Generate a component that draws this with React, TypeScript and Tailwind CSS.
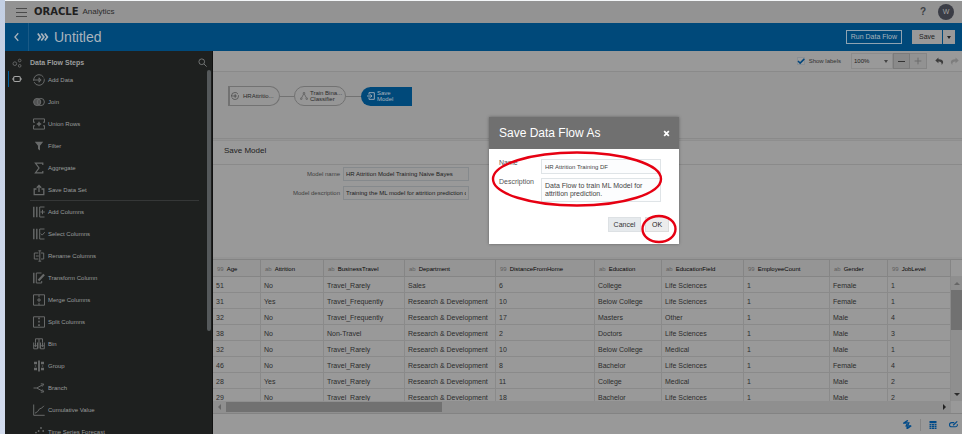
import type { ReactNode } from 'react';

const columns = [
  { name: 'Age', kind: '99', width: 'w-[48px]' },
  { name: 'Attrition', kind: 'ab', width: 'w-[63px]' },
  { name: 'BusinessTravel', kind: 'ab', width: 'w-[81px]' },
  { name: 'Department', kind: 'ab', width: 'w-[91px]' },
  { name: 'DistanceFromHome', kind: '99', width: 'w-[99px]' },
  { name: 'Education', kind: 'ab', width: 'w-[67px]' },
  { name: 'EducationField', kind: 'ab', width: 'w-[82px]' },
  { name: 'EmployeeCount', kind: '99', width: 'w-[86px]' },
  { name: 'Gender', kind: 'ab', width: 'w-[58px]' },
  { name: 'JobLevel', kind: '99', width: 'w-[63px]' },
];

const rows = [
  ['51', 'No', 'Travel_Rarely', 'Sales', '6', 'College', 'Life Sciences', '1', 'Female', '1'],
  ['31', 'Yes', 'Travel_Frequently', 'Research & Development', '10', 'Below College', 'Life Sciences', '1', 'Female', '1'],
  ['32', 'No', 'Travel_Frequently', 'Research & Development', '17', 'Masters', 'Other', '1', 'Male', '4'],
  ['38', 'No', 'Non-Travel', 'Research & Development', '2', 'Doctors', 'Life Sciences', '1', 'Male', '3'],
  ['32', 'No', 'Travel_Rarely', 'Research & Development', '10', 'Below College', 'Medical', '1', 'Male', '1'],
  ['46', 'No', 'Travel_Rarely', 'Research & Development', '8', 'Bachelor', 'Life Sciences', '1', 'Female', '4'],
  ['28', 'Yes', 'Travel_Rarely', 'Research & Development', '11', 'College', 'Medical', '1', 'Male', '2'],
  ['29', 'No', 'Travel_Rarely', 'Research & Development', '18', 'Bachelor', 'Life Sciences', '1', 'Male', '2'],
];

function Icon({ children, className = 'size-3' }: { children: ReactNode; className?: string }) {
  return (
    <svg viewBox="0 0 12 12" className={`${className} shrink-0`} fill="none" stroke="currentColor" strokeWidth="1" aria-hidden="true">
      {children}
    </svg>
  );
}

const addData = (
  <>
    <circle cx="6" cy="6" r="5.3" strokeDasharray="14 1.5" />
    <path d="M0 6h7M6 4l2.2 2L6 8M6 3.6v4.8" />
  </>
);

const steps: { label: string; icon: ReactNode; divider?: boolean }[] = [
  { label: 'Add Data', icon: addData },
  {
    label: 'Join',
    icon: (
      <>
        <circle cx="4.2" cy="6" r="3.6" fill="currentColor" fillOpacity=".7" />
        <circle cx="7.8" cy="6" r="3.6" />
      </>
    ),
  },
  {
    label: 'Union Rows',
    icon: (
      <>
        <path d="M.5 4V.9h11V4M.5 8v3.1h11V8M0 4.2h2M10 4.2h2M0 7.8h2M10 7.8h2" />
        <path d="M6 3.8v4.4M3.8 6h4.4" strokeWidth="1.4" />
      </>
    ),
  },
  { label: 'Filter', icon: <path d="M1.8 1.8h8.4L7 5.8v4.6L5 9V5.8z" fill="currentColor" stroke="none" /> },
  { label: 'Aggregate', icon: <path d="M9.8 3V1.2H2.4L6 6 2.4 10.8h7.4V9" strokeWidth="1.2" /> },
  { label: 'Save Data Set', divider: true, icon: <path d="M3.5 5H1.2v5.6h9.6V5H8.5M6 8V1.6M3.8 3.8 6 1.4l2.2 2.4" strokeWidth="1.3" /> },
  {
    label: 'Add Columns',
    icon: (
      <>
        <path d="M.8.8v10.4M3.8.8v10.4" strokeWidth="1.4" />
        <path d="M11.5 1H6.7v10h4.8M9.5 3.8v4.4M7.4 6h4.4" />
      </>
    ),
  },
  {
    label: 'Select Columns',
    icon: (
      <>
        <path d="M.8.8v10.4M3.8.8v10.4" strokeWidth="1.4" />
        <path d="M11.5 1H6.7v10h4.8M7.8 5.6l1.4 1.5 2.6-2.9" />
      </>
    ),
  },
  {
    label: 'Rename Columns',
    icon: (
      <>
        <path d="M5.4 3H1.3v6h4.1M8 3h2.7v6H8M2.8 6h3" />
        <path d="M6.8.8v10.4M5.4.8h2.8M5.4 11.2h2.8" />
      </>
    ),
  },
  {
    label: 'Transform Column',
    icon: (
      <>
        <path d="M.8.8v10.4" strokeWidth="1.4" />
        <path d="M8.5 1H3.3v10h5.4V9" />
        <path d="m5.5 8.5 5.6-6" strokeWidth="2.2" />
      </>
    ),
  },
  { label: 'Merge Columns', icon: <path d="M.5.8h11v10.4H.5zM6 .8v2.4M6 8.8v2.4M6 4v4M4 6h4" /> },
  {
    label: 'Split Columns',
    icon: (
      <>
        <path d="M.5.8h11v10.4H.5z" />
        <path d="M6 1.4v9.4" strokeWidth="1.6" strokeDasharray="1.8 1.6" />
      </>
    ),
  },
  {
    label: 'Bin',
    icon: <path d="M2.5 4.5V.8h7v3.7M.7 4.5v6.3h3.8V4.5M7.5 4.5v6.3h3.8V4.5M2.5 4.5v4M1 7.2l1.5 1.6L4 7.2M9.5 4.5v4M8 7.2l1.5 1.6L11 7.2M6 1v9.5" />,
  },
  {
    label: 'Group',
    icon: (
      <>
        <path d="M6 .6v10.8" strokeWidth="1.8" />
        <path d="M1 3h3M8 3h3M1 9h3M8 9h3" strokeWidth="2.6" />
        <path d="M1.8 6h1.4M8.8 6h1.4" strokeWidth="1.2" />
      </>
    ),
  },
  { label: 'Branch', icon: <path d="M.5 6h3.3l5.8-3.2M3.8 6l5.8 3.2M7.8 1.8l3 .3-1.6 2.5M7.8 10.2l3-.3-1.6-2.5" /> },
  { label: 'Cumulative Value', icon: <path d="M.7.5v10.8h11M2 9.2l2.6-1.6 2-2.8 2-.6 2.3-2.4" /> },
  {
    label: 'Time Series Forecast',
    icon: (
      <g fill="currentColor" stroke="none">
        <circle cx="8" cy="2" r=".9" />
        <circle cx="5.6" cy="5" r=".9" />
        <circle cx="10.2" cy="5" r=".9" />
        <circle cx="3" cy="6.6" r=".9" />
        <circle cx="1" cy="9.4" r=".9" />
      </g>
    ),
  },
];

const undoShape = <path d="M4.6.8.4 4.6l4.2 3.6V5.9c3-.2 4.6 1 4.2 4.9C12.600 7 11 2.800 4.600 3z" fill="currentColor" stroke="none" />;

function TopBar() {
  return (
    <header className="flex h-[22px] shrink-0 items-center bg-[#939393] text-[#2b2b2b]">
      <button aria-label="Menu" className="ml-[11px] flex w-[11px] flex-col gap-[3px]">
        <span className="h-px w-full bg-[#4a4a4a]" />
        <span className="h-px w-full bg-[#4a4a4a]" />
        <span className="h-px w-full bg-[#4a4a4a]" />
      </button>
      <span className="ml-[7px] font-['DejaVu_Sans','Liberation_Sans',sans-serif] text-[10px] font-bold leading-3 text-[#202020]">ORACLE</span>
      <span className="ml-1 text-[8px] leading-3">Analytics</span>
      <button aria-label="Help" className="ml-auto text-[10px] font-bold leading-3 text-[#3c3f44]">?</button>
      <button aria-label="Account" className="mr-2 ml-3 flex size-4 items-center justify-center rounded-full bg-[#3b3d46] text-[7px] leading-2 text-[#a4a4a4]">W</button>
    </header>
  );
}

function TitleBar() {
  return (
    <div className="flex h-7 shrink-0 items-center bg-[#00497a] text-[#a9b4bd]">
      <button aria-label="Back" className="flex h-full w-6 items-center justify-center border-r border-[#1a5a86]">
        <Icon className="size-[10px]">
          <path d="M7.5 1.5 3.5 6l4 4.500" strokeWidth="1.5" />
        </Icon>
      </button>
      <svg viewBox="0 0 12 8" className="ml-2 h-2 w-3" fill="none" stroke="currentColor" strokeWidth="1.7" aria-hidden="true">
        <path d="m.8.6 2.600 3.400L.8 7.400M4.300.6l2.600 3.400-2.600 3.400M7.800.6 10.400 4 7.800 7.400" />
      </svg>
      <h1 className="ml-[5px] text-[14px] leading-4">Untitled</h1>
      <button className="ml-auto h-[14px] border border-[#8fa3b1] px-1 text-[7px] leading-3 text-[#aab4bb]">Run Data Flow</button>
      <div className="mr-[7px] ml-[10px] flex h-[14px] bg-[#999] text-[#222]">
        <button className="w-[30px] text-[7px] leading-3">Save</button>
        <button aria-label="More save options" className="flex w-[13px] items-center justify-center border-l border-[#00497a]">
          <span className="border-x-[2px] border-t-[3px] border-x-transparent border-t-[#222]" />
        </button>
      </div>
    </div>
  );
}

function Sidebar() {
  return (
    <aside className="relative flex w-[208px] shrink-0 overflow-hidden border-r border-[#111] bg-[#1e201f] text-[#8a8c8c]">
      <nav className="flex w-6 shrink-0 flex-col text-[#6d6f6f]" aria-label="Panels">
        <button aria-label="Data" className="mt-1 flex h-4 w-full items-center justify-center">
          <Icon className="size-[10px]">
            <circle cx="3.4" cy="6.8" r="2.2" />
            <circle cx="9.2" cy="3" r="1.6" />
            <circle cx="9.2" cy="9.4" r="1.6" />
          </Icon>
        </button>
        <button aria-label="Steps" className="ml-[3px] flex h-4 items-center border-l border-[#00609f] pl-[3px] text-[#a5a5a5]">
          <Icon className="size-[10px]">
            <rect x="2" y="3" width="8" height="6" rx="1.5" strokeWidth="1.3" />
            <path d="M0 6h2M10 6h2" strokeWidth="1.3" />
          </Icon>
        </button>
      </nav>
      <div className="min-w-0 flex-1">
        <div className="flex h-[18px] items-end pr-[5px] pl-px">
          <h2 className="text-[7px] font-bold leading-3 text-[#9c9e9e]">Data Flow Steps</h2>
          <button aria-label="Search steps" className="ml-auto pb-[2px]">
            <Icon className="size-[9px]">
              <circle cx="5" cy="5" r="3.8" />
              <path d="m8 8 3.500 3.500" />
            </Icon>
          </button>
        </div>
        <ul className="mr-[13px] ml-px">
          {steps.map((s) => (
            <li key={s.label} className={s.divider ? 'h-[22px] border-b border-[#353737]' : 'h-[22px]'}>
              <button className="flex h-full w-full items-center gap-[3px] pl-[3px] text-[6px] leading-2 text-[#9a9c9c]">
                <span className="text-[#686a6a]">
                  <Icon>{s.icon}</Icon>
                </span>
                {s.label}
              </button>
            </li>
          ))}
        </ul>
      </div>
      <div className="absolute top-[19px] right-px h-[261px] w-1 rounded-full bg-[#55595b]" />
    </aside>
  );
}

function Toolbar() {
  return (
    <div className="flex h-[21px] shrink-0 items-center justify-end border-b border-[#8a8a8a] bg-[#999]">
      <label className="flex items-center gap-1 text-[6px] leading-2 text-[#333]">
        <span className="grid size-2 place-items-center">
          <input type="checkbox" defaultChecked className="col-start-1 row-start-1 size-2 appearance-none border border-[#8a8f94] bg-[#9c9c9c]" />
          <Icon className="pointer-events-none col-start-1 row-start-1 size-2 text-[#00457c]">
            <path d="m1.5 6 3.200 3.200L11 2.800" strokeWidth="2.2" />
          </Icon>
        </span>
        Show labels
      </label>
      <div className="relative ml-[10px] flex items-center">
        <select aria-label="Zoom" className="h-4 w-[42px] appearance-none border border-[#8c8c8c] bg-[#999] pl-[2px] text-[6px] leading-2 text-[#222]">
          <option>100%</option>
        </select>
        <span className="pointer-events-none absolute right-[5px] border-x-[2px] border-t-[3px] border-x-transparent border-t-[#444]" />
      </div>
      <button aria-label="Zoom out" className="flex h-4 w-[17px] items-center justify-center border border-[#7b7b7b] bg-[#8a8a8a]">
        <span className="h-px w-[7px] bg-[#333]" />
      </button>
      <button aria-label="Zoom in" className="flex h-4 w-[17px] items-center justify-center border-y border-r border-[#858585] bg-[#929292] text-[#6c6c6c]">
        <Icon className="size-2">
          <path d="M6 1v10M1 6h10" strokeWidth="1.5" />
        </Icon>
      </button>
      <button aria-label="Undo" className="ml-2 text-[#3d3d3d]">
        <Icon className="size-[9px]">{undoShape}</Icon>
      </button>
      <button aria-label="Redo" className="mr-[3px] ml-[6px] -scale-x-100 text-[#7d7d7d]">
        <Icon className="size-[9px]">{undoShape}</Icon>
      </button>
    </div>
  );
}

function FlowCanvas() {
  return (
    <div className="flex shrink-0 items-center border-b border-[#8a8a8a] bg-[#969696] pt-[14px] pb-8 pl-[15px] text-[6px] leading-[6px] text-[#2b2b2b]">
      <button className="flex h-5 w-[52px] items-center gap-1 rounded-r-full border border-l-2 border-[#727272] pl-px text-left">
        <Icon className="size-2 text-[#444]">{addData}</Icon>
        HRAttritio...
      </button>
      <span className="h-px w-[14px] bg-[#727272]" />
      <button className="flex h-5 w-[52px] items-center gap-[2px] rounded-full border border-[#727272] pl-[5px] text-left">
        <Icon className="size-2 text-[#555]">
          <circle cx="6" cy="1.8" r="1.3" />
          <circle cx="1.8" cy="10" r="1.3" />
          <circle cx="10.2" cy="10" r="1.3" />
          <path d="M5.400 3 2.500 8.800M6.600 3l2.900 5.800" />
        </Icon>
        <span>
          Train Bina...
          <br />
          Classifier
        </span>
      </button>
      <span className="h-px w-[15px] bg-[#727272]" />
      <button className="flex h-[19px] w-[51px] items-center gap-[2px] rounded-l-full bg-[#00497a] pl-[6px] text-left text-[#a9b4bd]">
        <Icon className="size-2">
          <path d="M3 4V1h8v10H3V8M0 6h7M5 3.600 7.400 6 5 8.400" strokeWidth="1.3" />
        </Icon>
        <span>
          Save
          <br />
          Model
        </span>
      </button>
    </div>
  );
}

function ModelForm() {
  const field = 'h-[14px] w-[126px] border border-[#85898c] bg-[#989898] px-[2px] text-[6px] leading-2 text-[#1c1c1c]';
  return (
    <section className="mt-px flex flex-1 flex-col border-t border-[#8e8e8e] bg-[#999]">
      <h2 className="h-6 border-b border-[#8a8a8a] pl-[11px] text-[8px] leading-[20px] text-[#1e1e1e]">Save Model</h2>
      <div className="grid grid-cols-[127px_auto] items-center justify-start gap-x-[3px] gap-y-[5px] pt-[2px] text-[6px] leading-2 text-[#404040]">
        <label htmlFor="model-name" className="text-right">Model name</label>
        <input id="model-name" className={field} defaultValue="HR Attrition Model Training Naive Bayes" />
        <label htmlFor="model-description" className="text-right">Model description</label>
        <input id="model-description" className={field} defaultValue="Training the ML model for attrition prediction dataset" />
      </div>
    </section>
  );
}

function DataGrid() {
  return (
    <section className="mt-[2px] shrink-0 border-y border-[#838383] bg-[#999]">
      <div className="flex h-[141px]">
        <div className="min-w-0 flex-1 overflow-hidden">
          <table className="w-full table-fixed border-separate border-spacing-0 text-left">
            <thead>
              <tr>
                {columns.map((c) => (
                  <th key={c.name} className={`${c.width} h-[17px] overflow-hidden border-r border-b border-[#858585] bg-[#959595] p-0 pt-[2px] pl-1 text-[6px] font-normal leading-2 whitespace-nowrap text-[#050505]`}>
                    <span className="mr-[3px] text-[#5e5e5e]">{c.kind}</span>
                    {c.name}
                  </th>
                ))}
              </tr>
            </thead>
            <tbody>
              {rows.map((r, i) => (
                <tr key={i}>
                  {r.map((v, j) => (
                    <td key={j} className="h-4 overflow-hidden border-r border-b border-[#8a8a8a] p-0 pt-[3px] pl-[3px] text-[7px] leading-2 whitespace-nowrap text-[#2c2c2c]">
                      {v}
                    </td>
                  ))}
                </tr>
              ))}
            </tbody>
          </table>
        </div>
        <div className="flex w-[11px] shrink-0 flex-col items-center pt-4">
          <div className="flex w-full flex-1 flex-col items-center bg-[#8f8f8f] pt-[6px] pb-[5px]">
            <span className="border-x-[3px] border-b-[3px] border-x-transparent border-b-[#666]" />
            <span className="mt-[5px] h-10 w-full bg-[#717171]" />
            <span className="mt-auto border-x-[3px] border-t-[3px] border-x-transparent border-t-[#2c2c2c]" />
          </div>
        </div>
      </div>
      <div className="mr-[11px] flex h-3 items-center bg-[#8f8f8f] px-[5px]">
        <span className="border-y-[3px] border-r-[3px] border-y-transparent border-r-[#666]" />
        <span className="ml-[5px] h-[10px] w-[216px] bg-[#717171]" />
        <span className="ml-auto border-y-[3px] border-l-[3px] border-y-transparent border-l-[#222]" />
      </div>
    </section>
  );
}

function StatusBar() {
  return (
    <footer className="flex h-5 shrink-0 items-center justify-end bg-[#999] pt-px pr-1 text-[#004a88]">
      <button aria-label="Auto apply">
        <Icon className="size-[9px]">
          <path d="M6.500.5 1 4h3.500M11 7.500 5.500 11.500V8M1.500 3.800h6.200L6.500 6.500M10.500 7.800H4.300L5.500 5.500" strokeWidth="1.8" />
        </Icon>
      </button>
      <span className="mr-2 ml-2 h-3 w-px bg-[#858585]" />
      <button aria-label="Data preview">
        <svg viewBox="0 0 8 8" className="size-2" fill="currentColor" aria-hidden="true">
          <path d="M.5 0h7v2.300h-7zM.5 3h2v1.200h-2zM3 3h2v1.200H3zM5.500 3h2v1.200h-2zM.5 4.800h2V6h-2zM3 4.800h2V6H3zM5.500 4.800h2V6h-2zM.5 6.600h2V8h-2zM3 6.600h2V8H3zM5.500 6.600h2V8h-2z" />
        </svg>
      </button>
      <button aria-label="Step editor" className="ml-3">
        <Icon className="size-[9px]">
          <path d="M7 3.500H3.500a2.800 2.800 0 0 0 0 5.600h5a2.600 2.600 0 0 0 2.400-3.600" strokeWidth="1.4" />
          <path d="M5.500 7 11 1.800" strokeWidth="1.6" />
        </Icon>
      </button>
    </footer>
  );
}

function SaveDialog() {
  const box = 'w-full border border-[#dfe4e7] bg-[#fcfdfe] px-[3px] text-[#444]';
  return (
    <div className="pointer-events-none absolute inset-0 flex items-start justify-center pt-[117px] pl-[206px]">
      <div role="dialog" aria-labelledby="dialog-title" className="pointer-events-auto relative w-[190px] bg-white text-[7px] leading-2 text-[#555] shadow-[0_0_3px_rgba(0,0,0,0.35)]">
        <div className="flex h-8 items-center bg-[#707070] pr-[9px] pl-[10px] text-white">
          <h2 id="dialog-title" className="text-[12px] leading-4">Save Data Flow As</h2>
          <button aria-label="Close" className="ml-auto">
            <Icon className="size-[7px]">
              <path d="m2 2 8 8M10 2l-8 8" strokeWidth="3" />
            </Icon>
          </button>
        </div>
        <div className="grid grid-cols-[42px_1fr] gap-y-1 pt-[10px] pr-[18px] pl-[10px]">
          <label htmlFor="flow-name">Name</label>
          <input id="flow-name" className={`${box} h-[15px] text-[6px] leading-2`} defaultValue="HR Attrition Training DF" />
          <label htmlFor="flow-description">Description</label>
          <textarea id="flow-description" className={`${box} h-6 resize-none overflow-hidden pt-[3px] text-[7px] leading-2`} defaultValue="Data Flow to train ML Model for attrition prediction." />
        </div>
        <div className="flex justify-end gap-1 pt-[15px] pr-[10px] pb-3">
          <button className="h-[15px] w-[33px] border border-[#dde1e4] bg-[#e6eaed] text-[#333]">Cancel</button>
          <button className="h-[15px] w-6 border border-[#dcdcdc] bg-[#ececec] text-[#222]">OK</button>
        </div>
        <svg viewBox="0 0 190 127" className="pointer-events-none absolute top-0 left-0 h-[127px] w-[190px] overflow-visible" fill="none" stroke="#e60012" strokeWidth="2.4" aria-hidden="true">
          <ellipse cx="88" cy="62" rx="84" ry="26.5" />
          <ellipse cx="170" cy="112" rx="16.5" ry="13" />
        </svg>
      </div>
    </div>
  );
}

export default function App() {
  return (
    <div className="relative flex h-screen flex-col overflow-hidden bg-gradient-to-b from-[#c3cfe3] to-[#d3dcee] pl-[5px] font-['Liberation_Sans',Arial,sans-serif]">
      <div className="h-px shrink-0 bg-[#f3f6f8]" />
      <TopBar />
      <TitleBar />
      <div className="flex min-h-0 flex-1">
        <Sidebar />
        <main className="flex min-w-0 flex-1 flex-col bg-[#949494]">
          <Toolbar />
          <FlowCanvas />
          <ModelForm />
          <DataGrid />
          <StatusBar />
        </main>
      </div>
      <SaveDialog />
    </div>
  );
}
